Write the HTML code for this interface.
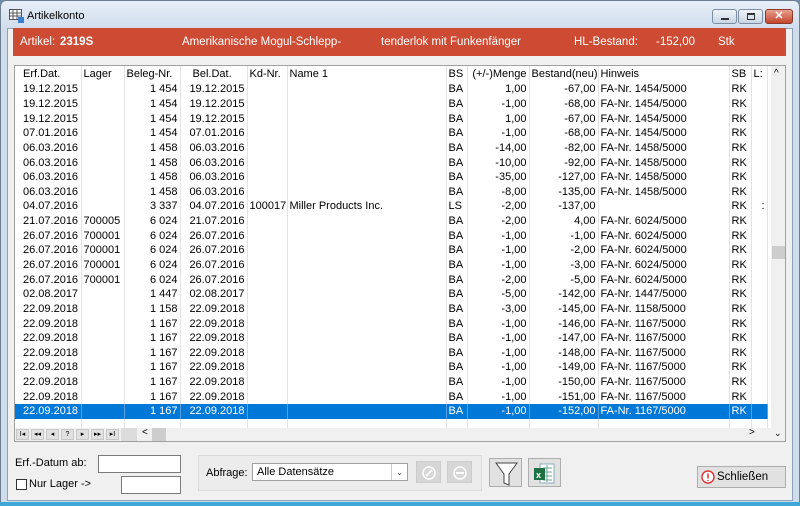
<!DOCTYPE html>
<html><head><meta charset="utf-8"><style>
*{margin:0;padding:0;box-sizing:border-box}
body{width:800px;height:506px;overflow:hidden;font-family:"Liberation Sans",Arial,sans-serif;font-size:11px;color:#000;background:#6f8fb0;position:relative}
.win{position:absolute;left:0;top:0;width:800px;height:506px;background:linear-gradient(#e6eef8,#cfdcec 30px);border:1px solid #6f7f90;border-radius:6px 6px 0 0}
.title{position:absolute;left:26px;top:9px;font-size:11px}
.client{position:absolute;left:7px;top:28px;width:786px;height:473px;background:#f0f0f0;border:1px solid #8ea3bb}
.bottomline{position:absolute;left:0;top:502px;width:800px;height:4px;background:#3fa7d8}
.red{position:absolute;left:13px;top:28px;width:773px;height:28px;background:#cd4a33;color:#fff;font-size:11.5px}
.red span{position:absolute;top:8px}
.grid{position:absolute;left:14px;top:65px;width:772px;height:377px;background:#fff;border:1px solid #a0a0a0;overflow:hidden}
table{border-collapse:collapse;table-layout:fixed;position:absolute;left:0;top:0;width:752px}
td{height:14.65px;line-height:14px;white-space:nowrap;overflow:hidden;border-right:1px solid #e3e3e3;padding:0 2px}
tr.h td{height:16px;line-height:16px}
.r{text-align:right}
tr.sel td{background:#0078d7;color:#fff;border-right:1px solid #5aa0e0}
.vs{position:absolute;left:756px;top:0;width:15px;height:375px;background:#f0f0f0}
.nav{position:absolute;left:0;top:362px;width:756px;height:13px;background:#f0f0f0}
.nb{position:absolute;top:1px;width:13px;height:11px;background:#e1e1e1;border:1px solid #c8c8c8;font-size:7px;line-height:9px;text-align:center}
.box{position:absolute;background:#fff;border:1px solid #7a7a7a}
.btn{position:absolute;background:#e1e1e1;border:1px solid #adadad}
</style></head><body>
<div class="win">
 <svg style="position:absolute;left:8px;top:8px" width="16" height="14"><rect x="0.5" y="0.5" width="12" height="10" fill="#fff" stroke="#555"/><path d="M0 4h13M0 7h13M4 0v11M8 0v11" stroke="#555"/><rect x="9" y="8" width="6" height="6" fill="#3a7fd0"/></svg>
 <div class="title">Artikelkonto</div>
 <div style="position:absolute;left:711px;top:8px;width:25px;height:15px;border:1px solid #7d8ea3;border-radius:3px;background:linear-gradient(#eef3f9,#c9d6e5)"><div style="position:absolute;left:8px;top:8px;width:8px;height:2px;background:#333"></div></div>
 <div style="position:absolute;left:737px;top:8px;width:25px;height:15px;border:1px solid #7d8ea3;border-radius:3px;background:linear-gradient(#eef3f9,#c9d6e5)"><div style="position:absolute;left:8px;top:3px;width:8px;height:7px;border:1px solid #333;border-top-width:2px"></div></div>
 <div style="position:absolute;left:764px;top:8px;width:28px;height:15px;border:1px solid #8b3a2c;border-radius:3px;background:linear-gradient(#e8a090,#c4442b);color:#fff;font-weight:bold;text-align:center;line-height:13px;font-size:11px">✕</div>
</div>
<div class="client"></div>
<div class="bottomline"></div>
<div class="red">
 <span style="left:7px">Artikel:</span><span style="left:47px;font-weight:bold">2319S</span>
 <span style="left:169px">Amerikanische Mogul-Schlepp-</span>
 <span style="left:368px">tenderlok mit Funkenfänger</span>
 <span style="left:561px">HL-Bestand:</span><span style="left:643px">-152,00</span><span style="left:705px">Stk</span>
</div>
<div class="grid">
<table>
<colgroup><col style="width:66px"><col style="width:43px"><col style="width:56px"><col style="width:67px"><col style="width:40px"><col style="width:159px"><col style="width:21px"><col style="width:62px"><col style="width:69px"><col style="width:131px"><col style="width:22px"><col style="width:16px"></colgroup>
<tr class="h"><td style="padding-left:8px">Erf.Dat.</td><td>Lager</td><td>Beleg-Nr.</td><td style="padding-left:12px">Bel.Dat.</td><td>Kd-Nr.</td><td>Name 1</td><td>BS</td><td class="r">(+/-)Menge</td><td>Bestand(neu)</td><td>Hinweis</td><td>SB</td><td>L:</td></tr>
<tr><td style="padding-left:8px">19.12.2015</td><td></td><td class="r">1 454</td><td class="r">19.12.2015</td><td></td><td></td><td>BA</td><td class="r">1,00</td><td class="r">-67,00</td><td>FA-Nr. 1454/5000</td><td>RK</td><td></td></tr>
<tr><td style="padding-left:8px">19.12.2015</td><td></td><td class="r">1 454</td><td class="r">19.12.2015</td><td></td><td></td><td>BA</td><td class="r">-1,00</td><td class="r">-68,00</td><td>FA-Nr. 1454/5000</td><td>RK</td><td></td></tr>
<tr><td style="padding-left:8px">19.12.2015</td><td></td><td class="r">1 454</td><td class="r">19.12.2015</td><td></td><td></td><td>BA</td><td class="r">1,00</td><td class="r">-67,00</td><td>FA-Nr. 1454/5000</td><td>RK</td><td></td></tr>
<tr><td style="padding-left:8px">07.01.2016</td><td></td><td class="r">1 454</td><td class="r">07.01.2016</td><td></td><td></td><td>BA</td><td class="r">-1,00</td><td class="r">-68,00</td><td>FA-Nr. 1454/5000</td><td>RK</td><td></td></tr>
<tr><td style="padding-left:8px">06.03.2016</td><td></td><td class="r">1 458</td><td class="r">06.03.2016</td><td></td><td></td><td>BA</td><td class="r">-14,00</td><td class="r">-82,00</td><td>FA-Nr. 1458/5000</td><td>RK</td><td></td></tr>
<tr><td style="padding-left:8px">06.03.2016</td><td></td><td class="r">1 458</td><td class="r">06.03.2016</td><td></td><td></td><td>BA</td><td class="r">-10,00</td><td class="r">-92,00</td><td>FA-Nr. 1458/5000</td><td>RK</td><td></td></tr>
<tr><td style="padding-left:8px">06.03.2016</td><td></td><td class="r">1 458</td><td class="r">06.03.2016</td><td></td><td></td><td>BA</td><td class="r">-35,00</td><td class="r">-127,00</td><td>FA-Nr. 1458/5000</td><td>RK</td><td></td></tr>
<tr><td style="padding-left:8px">06.03.2016</td><td></td><td class="r">1 458</td><td class="r">06.03.2016</td><td></td><td></td><td>BA</td><td class="r">-8,00</td><td class="r">-135,00</td><td>FA-Nr. 1458/5000</td><td>RK</td><td></td></tr>
<tr><td style="padding-left:8px">04.07.2016</td><td></td><td class="r">3 337</td><td class="r">04.07.2016</td><td>100017</td><td>Miller Products Inc.</td><td>LS</td><td class="r">-2,00</td><td class="r">-137,00</td><td></td><td>RK</td><td style="text-align:right">:</td></tr>
<tr><td style="padding-left:8px">21.07.2016</td><td>700005</td><td class="r">6 024</td><td class="r">21.07.2016</td><td></td><td></td><td>BA</td><td class="r">-2,00</td><td class="r">4,00</td><td>FA-Nr. 6024/5000</td><td>RK</td><td></td></tr>
<tr><td style="padding-left:8px">26.07.2016</td><td>700001</td><td class="r">6 024</td><td class="r">26.07.2016</td><td></td><td></td><td>BA</td><td class="r">-1,00</td><td class="r">-1,00</td><td>FA-Nr. 6024/5000</td><td>RK</td><td></td></tr>
<tr><td style="padding-left:8px">26.07.2016</td><td>700001</td><td class="r">6 024</td><td class="r">26.07.2016</td><td></td><td></td><td>BA</td><td class="r">-1,00</td><td class="r">-2,00</td><td>FA-Nr. 6024/5000</td><td>RK</td><td></td></tr>
<tr><td style="padding-left:8px">26.07.2016</td><td>700001</td><td class="r">6 024</td><td class="r">26.07.2016</td><td></td><td></td><td>BA</td><td class="r">-1,00</td><td class="r">-3,00</td><td>FA-Nr. 6024/5000</td><td>RK</td><td></td></tr>
<tr><td style="padding-left:8px">26.07.2016</td><td>700001</td><td class="r">6 024</td><td class="r">26.07.2016</td><td></td><td></td><td>BA</td><td class="r">-2,00</td><td class="r">-5,00</td><td>FA-Nr. 6024/5000</td><td>RK</td><td></td></tr>
<tr><td style="padding-left:8px">02.08.2017</td><td></td><td class="r">1 447</td><td class="r">02.08.2017</td><td></td><td></td><td>BA</td><td class="r">-5,00</td><td class="r">-142,00</td><td>FA-Nr. 1447/5000</td><td>RK</td><td></td></tr>
<tr><td style="padding-left:8px">22.09.2018</td><td></td><td class="r">1 158</td><td class="r">22.09.2018</td><td></td><td></td><td>BA</td><td class="r">-3,00</td><td class="r">-145,00</td><td>FA-Nr. 1158/5000</td><td>RK</td><td></td></tr>
<tr><td style="padding-left:8px">22.09.2018</td><td></td><td class="r">1 167</td><td class="r">22.09.2018</td><td></td><td></td><td>BA</td><td class="r">-1,00</td><td class="r">-146,00</td><td>FA-Nr. 1167/5000</td><td>RK</td><td></td></tr>
<tr><td style="padding-left:8px">22.09.2018</td><td></td><td class="r">1 167</td><td class="r">22.09.2018</td><td></td><td></td><td>BA</td><td class="r">-1,00</td><td class="r">-147,00</td><td>FA-Nr. 1167/5000</td><td>RK</td><td></td></tr>
<tr><td style="padding-left:8px">22.09.2018</td><td></td><td class="r">1 167</td><td class="r">22.09.2018</td><td></td><td></td><td>BA</td><td class="r">-1,00</td><td class="r">-148,00</td><td>FA-Nr. 1167/5000</td><td>RK</td><td></td></tr>
<tr><td style="padding-left:8px">22.09.2018</td><td></td><td class="r">1 167</td><td class="r">22.09.2018</td><td></td><td></td><td>BA</td><td class="r">-1,00</td><td class="r">-149,00</td><td>FA-Nr. 1167/5000</td><td>RK</td><td></td></tr>
<tr><td style="padding-left:8px">22.09.2018</td><td></td><td class="r">1 167</td><td class="r">22.09.2018</td><td></td><td></td><td>BA</td><td class="r">-1,00</td><td class="r">-150,00</td><td>FA-Nr. 1167/5000</td><td>RK</td><td></td></tr>
<tr><td style="padding-left:8px">22.09.2018</td><td></td><td class="r">1 167</td><td class="r">22.09.2018</td><td></td><td></td><td>BA</td><td class="r">-1,00</td><td class="r">-151,00</td><td>FA-Nr. 1167/5000</td><td>RK</td><td></td></tr>
<tr class="sel"><td style="padding-left:8px">22.09.2018</td><td></td><td class="r">1 167</td><td class="r">22.09.2018</td><td></td><td></td><td>BA</td><td class="r">-1,00</td><td class="r">-152,00</td><td>FA-Nr. 1167/5000</td><td>RK</td><td></td></tr>
<tr><td></td><td></td><td></td><td></td><td></td><td></td><td></td><td></td><td></td><td></td><td></td><td></td></tr>
</table>
<div class="vs">
 <div style="position:absolute;top:2px;left:3px;font-size:10px">^</div>
 <div style="position:absolute;top:180px;left:1px;width:13px;height:13px;background:#cdcdcd"></div>
 <div style="position:absolute;top:362px;left:3px;font-size:9px">⌄</div>
</div>
<div class="nav">
 <div class="nb" style="left:1px">I◂</div><div class="nb" style="left:16px">◂◂</div><div class="nb" style="left:31px">◂</div><div class="nb" style="left:46px">?</div><div class="nb" style="left:61px">▸</div><div class="nb" style="left:76px">▸▸</div><div class="nb" style="left:91px">▸I</div>
 <div style="position:absolute;left:106px;top:0;width:16px;height:13px;background:#dcdcdc"></div>
 <div style="position:absolute;left:127px;top:-1px;font-size:10px">&lt;</div>
 <div style="position:absolute;left:137px;top:0;width:14px;height:13px;background:#cdcdcd"></div>
 <div style="position:absolute;left:734px;top:-1px;font-size:10px">&gt;</div>
</div>
</div>
<div style="position:absolute;left:15px;top:457px">Erf.-Datum ab:</div>
<div class="box" style="left:98px;top:455px;width:83px;height:18px"></div>
<div class="box" style="left:16px;top:479px;width:11px;height:11px;border-color:#333"></div>
<div style="position:absolute;left:29px;top:478px">Nur Lager -&gt;</div>
<div class="box" style="left:121px;top:476px;width:60px;height:18px"></div>
<div style="position:absolute;left:198px;top:455px;width:284px;height:36px;border:1px solid #dcdcdc;background:#ececec"></div>
<div style="position:absolute;left:206px;top:467px">Abfrage:</div>
<div class="box" style="left:252px;top:463px;width:156px;height:18px;border-color:#a0a0a0;line-height:16px;padding-left:4px">Alle Datensätze<span style="position:absolute;right:0;top:0;width:16px;height:16px;border-left:1px solid #ccc;text-align:center;font-size:9px;color:#555">⌄</span></div>
<div class="btn" style="left:416px;top:461px;width:25px;height:22px;background:#d6d6d6;border-color:#ccc"><svg width="25" height="22"><circle cx="12" cy="11" r="6" fill="none" stroke="#fff" stroke-width="1.5"/><path d="M9 14l6-6" stroke="#fff" stroke-width="2"/></svg></div>
<div class="btn" style="left:447px;top:461px;width:25px;height:22px;background:#d6d6d6;border-color:#ccc"><svg width="25" height="22"><circle cx="12" cy="11" r="6" fill="none" stroke="#fff" stroke-width="1.5"/><path d="M8 11h8" stroke="#fff" stroke-width="2"/></svg></div>
<div class="btn" style="left:489px;top:458px;width:33px;height:29px"><svg width="33" height="29"><path d="M6 4h21l-8 11v11l-5-2V15z" fill="#fff" stroke="#444"/></svg></div>
<div class="btn" style="left:528px;top:458px;width:33px;height:29px"><svg width="33" height="29"><rect x="11" y="5" width="14" height="19" fill="#fff" stroke="#8ab"/><path d="M14 9h9M14 13h9M14 17h9M14 21h9M18 6v17" stroke="#6a9"/><rect x="5" y="9" width="11" height="12" fill="#1e7145"/><text x="7" y="19" font-size="9" fill="#fff" font-family="Liberation Sans" font-weight="bold">x</text></svg></div>
<div class="btn" style="left:697px;top:466px;width:89px;height:22px;line-height:20px;padding-left:19px;font-size:11.5px">Schließen<svg style="position:absolute;left:3px;top:3px" width="14" height="14"><circle cx="7" cy="7" r="6" fill="#fff" stroke="#d33" stroke-width="1.4"/><path d="M7 3.5v5M7 10v1" stroke="#d33" stroke-width="1.5"/></svg></div>
</body></html>
